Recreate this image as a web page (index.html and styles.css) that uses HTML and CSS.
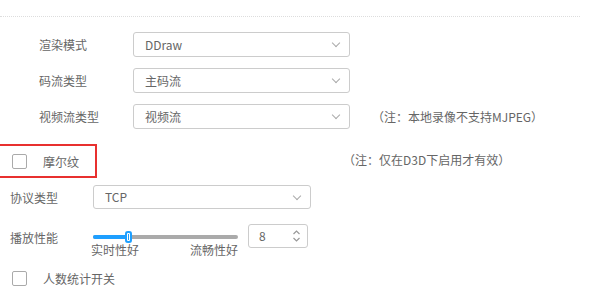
FILE: index.html
```html
<!DOCTYPE html>
<html lang="zh-CN">
<head>
<meta charset="UTF-8" />
<title>播放设置</title>
<link rel="stylesheet" href="styles.css">
</head>
<body>
  <div class="divider"></div>

  <div class="group">
    <div class="row">
      <span class="label">渲染模式</span>
      <div class="select">DDraw<span class="chev"></span></div>
    </div>
    <div class="row">
      <span class="label">码流类型</span>
      <div class="select">主码流<span class="chev"></span></div>
    </div>
    <div class="row">
      <span class="label">视频流类型</span>
      <div class="select">视频流<span class="chev"></span></div>
      <span class="note note-mjpeg">（注：本地录像不支持MJPEG）</span>
    </div>
  </div>

  <div class="moire-row">
    <label class="moire">
      <span class="box"></span>
      <span class="check-text">摩尔纹</span>
    </label>
    <span class="note note-d3d">（注：仅在D3D下启用才有效）</span>
  </div>

  <div class="row row-wide">
    <span class="label label-short">协议类型</span>
    <div class="select select-wide">TCP<span class="chev"></span></div>
  </div>

  <div class="row row-wide perf">
    <span class="label label-short">播放性能</span>
    <div class="slider">
      <div class="track"><div class="fill"></div><div class="thumb"></div></div>
      <div class="ends"><span>实时性好</span><span>流畅性好</span></div>
    </div>
    <div class="spin">8
      <svg class="spin-arrows" width="9" height="14" viewBox="0 0 9 14">
        <path d="M1.5 5 L4.5 2 L7.5 5" fill="none" stroke="#999" stroke-width="1.2"/>
        <path d="M1.5 9 L4.5 12 L7.5 9" fill="none" stroke="#999" stroke-width="1.2"/>
      </svg>
    </div>
  </div>

  <label class="plain-check">
    <span class="box"></span>
    <span class="check-text">人数统计开关</span>
  </label>
</body>
</html>
```

FILE: styles.css
```css
body {
  margin: 0;
  font-family: "Noto Sans CJK SC", "Liberation Sans", sans-serif;
  font-size: 12px;
  color: #666;
  background: #fff;
  width: 598px;
  height: 305px;
  overflow: hidden;
}

.divider {
  margin-top: 16px;
  width: 580px;
  border-top: 1px dotted #ddd;
}

.group {
  padding-left: 39px;
  padding-top: 15px;
  display: flex;
  flex-direction: column;
  gap: 11px;
}

.row {
  display: flex;
  align-items: center;
}

.label {
  width: 94px;
  flex-shrink: 0;
}

.select {
  position: relative;
  box-sizing: border-box;
  width: 217px;
  height: 25px;
  line-height: 23px;
  border: 1px solid #ccc;
  border-radius: 3px;
  padding-left: 11px;
}

.chev {
  position: absolute;
  right: 10px;
  top: 7px;
  width: 5px;
  height: 5px;
  border-right: 1.3px solid #aaa;
  border-bottom: 1.3px solid #aaa;
  transform: rotate(45deg);
}

.note-mjpeg {
  margin-left: 22px;
}

.moire-row {
  display: flex;
  align-items: center;
  margin-top: 15px;
}

.moire {
  box-sizing: border-box;
  width: 97px;
  height: 34px;
  border: 2px solid #e8302f;
  border-left: none;
  display: flex;
  align-items: center;
  padding-left: 12px;
}

.box {
  box-sizing: border-box;
  width: 15px;
  height: 15px;
  border: 1px solid #aaa;
  border-radius: 2px;
  background: #fff;
  flex-shrink: 0;
}

.check-text {
  margin-left: 16px;
}

.note-d3d {
  margin-left: 246px;
  margin-top: -3px;
}

.row-wide {
  padding-left: 10px;
  margin-top: 7px;
}

.label-short {
  width: 83px;
}

.select-wide {
  width: 218px;
  height: 24px;
  line-height: 22px;
}

.perf {
  margin-top: 15px;
  align-items: flex-start;
}

.perf .label-short {
  margin-top: 5px;
}

.slider {
  width: 145px;
  padding-top: 11px;
}

.track {
  position: relative;
  height: 4px;
  background: #aaa;
  border-radius: 2px;
}

.fill {
  width: 36px;
  height: 4px;
  background: #1e9fff;
  border-radius: 2px;
}

.thumb {
  position: absolute;
  left: 32px;
  top: -4px;
  width: 7px;
  height: 12px;
  background: #1e9fff;
  border-radius: 3px;
  box-shadow: inset 0 0 0 2px #1e9fff, inset 0 0 0 3px #fff;
}

.ends {
  display: flex;
  justify-content: space-between;
  margin-left: -2px;
  margin-top: 4px;
  line-height: 14px;
}

.spin {
  position: relative;
  box-sizing: border-box;
  width: 60px;
  height: 24px;
  line-height: 22px;
  margin-left: 10px;
  border: 1px solid #ccc;
  border-radius: 3px;
  padding-left: 10px;
}

.spin-arrows {
  position: absolute;
  right: 6px;
  top: 4px;
}

.plain-check {
  display: flex;
  align-items: center;
  padding-left: 12px;
  margin-top: 13px;
}
```
